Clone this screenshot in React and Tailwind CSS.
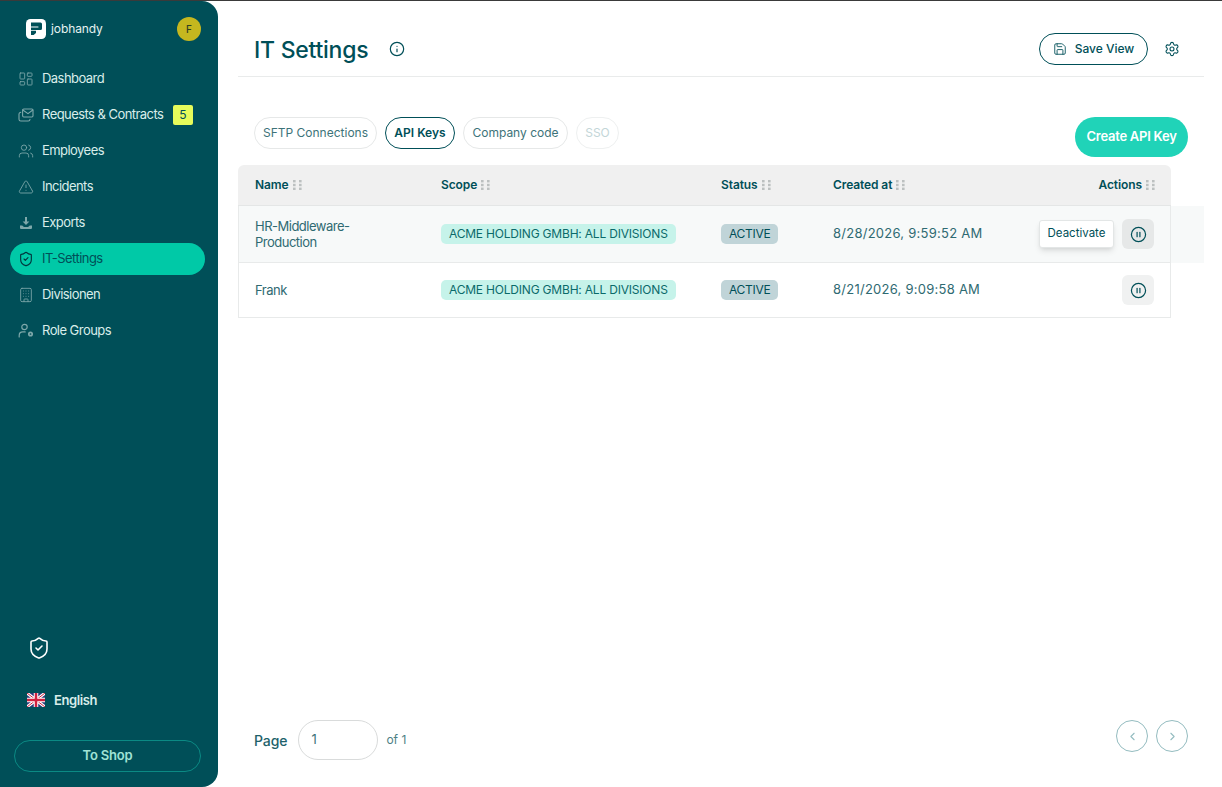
import React from 'react';
import { LayoutDashboard, Users, TriangleAlert, ShieldCheck, Building, Save, Settings, Info, CirclePause, ChevronLeft, ChevronRight } from 'lucide-react';

// icons the package has no match for
function RequestsIcon() {
  return (
    <svg width="16" height="16" viewBox="0 0 16 16" fill="none" stroke="currentColor" strokeWidth="1.1" strokeLinejoin="round" strokeLinecap="round">
      <rect x="4.6" y="2" width="10.4" height="8" rx="1.2" />
      <path d="M4.8 3l5.2 3.6L14.8 3" />
      <path d="M2.8 5.2C1.8 5.4 1 6 1 7v5.2C1 13.3 1.8 14 2.8 14h7.4c1 0 1.8-.7 1.8-1.8" />
    </svg>
  );
}

function ExportsIcon() {
  return (
    <svg width="16" height="16" viewBox="0 0 16 16" fill="currentColor">
      <path d="M7 2h2v4.5h2.4L8 10 4.6 6.5H7z" />
      <path d="M2 10.5h2.2L6 12h4l1.8-1.5H14v2.2c0 .8-.6 1.3-1.3 1.3H3.3c-.7 0-1.3-.5-1.3-1.3z" />
    </svg>
  );
}

function RoleIcon() {
  return (
    <svg width="16" height="16" viewBox="0 0 16 16" fill="none" stroke="currentColor" strokeWidth="1.2" strokeLinecap="round">
      <circle cx="6.5" cy="4" r="2.7" />
      <path d="M1.2 14v-1.5c0-2.2 1.6-3.6 3.6-3.6h2.4" />
      <circle cx="12.5" cy="11" r="1.7" strokeWidth="1.7" />
    </svg>
  );
}

function DragDots() {
  return (
    <svg width="9" height="10" viewBox="0 0 9 10" fill="#bcc0c0" className="shrink-0 -mt-px">
      <rect x="0" y="0" width="2.6" height="2.4" />
      <rect x="6" y="0" width="2.6" height="2.4" />
      <rect x="0" y="3.8" width="2.6" height="2.4" />
      <rect x="6" y="3.8" width="2.6" height="2.4" />
      <rect x="0" y="7.6" width="2.6" height="2.4" />
      <rect x="6" y="7.6" width="2.6" height="2.4" />
    </svg>
  );
}

function UkFlag() {
  return (
    <svg width="18" height="14" viewBox="0 0 18 14">
      <rect width="18" height="14" fill="#2b3a78" />
      <path d="M0 0l18 14M18 0L0 14" stroke="#fff" strokeWidth="3" />
      <path d="M0 0l18 14M18 0L0 14" stroke="#d0213f" strokeWidth="1" />
      <path d="M9 0v14M0 7h18" stroke="#fff" strokeWidth="4.5" />
      <path d="M9 0v14M0 7h18" stroke="#d0213f" strokeWidth="2.5" />
    </svg>
  );
}

const navItems = [
  { label: 'Dashboard', icon: <LayoutDashboard size={16} strokeWidth={1.3} /> },
  { label: 'Requests & Contracts', icon: <RequestsIcon />, badge: '5' },
  { label: 'Employees', icon: <Users size={16} strokeWidth={1.3} /> },
  { label: 'Incidents', icon: <TriangleAlert size={16} strokeWidth={1.3} /> },
  { label: 'Exports', icon: <ExportsIcon /> },
  { label: 'IT-Settings', icon: <ShieldCheck size={16} strokeWidth={1.7} />, active: true },
  { label: 'Divisionen', icon: <Building size={16} strokeWidth={1.3} /> },
  { label: 'Role Groups', icon: <RoleIcon /> },
];

const rows = [
  { name: ['HR-Middleware-', 'Production'], created: '8/28/2026, 9:59:52 AM', hover: true },
  { name: ['Frank'], created: '8/21/2026, 9:09:58 AM' },
];

function Sidebar() {
  return (
    <aside className="w-[218px] shrink-0 h-full bg-[#004f58] rounded-r-2xl flex flex-col">
      <div className="flex items-center justify-between pl-[26px] pr-[17px] h-[61px] pb-[5px]">
        <div className="flex items-center gap-[5px]">
          <svg width="20" height="20" viewBox="0 0 20 20">
            <rect width="20" height="20" rx="4.5" fill="#fff" />
            <path d="M5 3.5h9.5A1.5 1.5 0 0116 5v4.5a1.5 1.5 0 01-1.5 1.5H5V8.6h7.4V7.4H5z" fill="#004f58" />
            <path d="M5 11.8h5V14l-2.4 2H5z" fill="#004f58" />
          </svg>
          <span className="text-[12px] leading-none text-[#e6f2f1] font-normal tracking-[-0.1px]">jobhandy</span>
        </div>
        <div className="w-6 h-6 rounded-full bg-[#c5b71f] flex items-center justify-center text-[10px] font-medium text-[#2f3f22]">F</div>
      </div>
      <nav className="flex flex-col gap-1 pl-[10px] pr-[13px] mt-px">
        {navItems.map((item) => (
          <div
            key={item.label}
            className={`h-8 flex items-center gap-2 pl-2 pr-3 rounded-full ${item.active ? 'bg-[#00c9a7] text-[#004f58]' : 'text-[#d9edea]'}`}
          >
            <span className={item.active ? 'text-[#00363d]' : 'text-[#7ea8aa]'}>{item.icon}</span>
            <span className="text-[13px] tracking-[-0.55px] whitespace-nowrap">{item.label}</span>
            {item.badge && (
              <span className="ml-auto w-5 h-5 bg-[#e6fb5b] rounded-[2px] text-[#004f58] text-xs flex items-center justify-center">{item.badge}</span>
            )}
          </div>
        ))}
      </nav>
      <div className="mt-auto flex flex-col">
        <div className="pl-[27px] text-white">
          <ShieldCheck size={24} strokeWidth={1.6} />
        </div>
        <div className="flex items-center gap-[9px] pl-[27px] mt-[31px] text-[13px] font-semibold tracking-[-0.4px] text-[#d9edea]">
          <UkFlag />
          <span>English</span>
        </div>
        <button className="ml-[14px] mr-[17px] mt-[30px] mb-[15px] h-8 rounded-full border border-[#0b8a84] text-[13px] font-semibold tracking-[-0.2px] text-[#a0e3d5]">To Shop</button>
      </div>
    </aside>
  );
}

function Th({ children, className }) {
  return (
    <div className={`flex items-center gap-1 text-[12px] font-semibold tracking-[-0.1px] text-[#004f58] ${className}`}>
      {children}
      <DragDots />
    </div>
  );
}

function Row({ row }) {
  return (
    <div className={row.hover ? 'bg-[#f7f9f9]' : ''}>
      <div className={`w-[933px] flex items-center border-x border-b border-[#e8eaea] ${row.hover ? 'h-[57px]' : 'h-[55px]'}`}>
        <div className="w-[185px] pl-4 text-[13px] leading-4 text-[#2f6a72] tracking-[-0.5px]">
          {row.name.map((n) => <div key={n}>{n}</div>)}
        </div>
        <div className="w-[280px] pl-[17px] flex">
          <span className="h-5 flex items-center px-2 rounded-[5px] bg-[#c6f3ea] text-[12px] text-[#0b6a6a] tracking-[-0.2px] whitespace-nowrap">ACME HOLDING GMBH: ALL DIVISIONS</span>
        </div>
        <div className="w-[112px] pl-[17px] flex">
          <span className="h-5 flex items-center px-2 rounded-[5px] bg-[#c0d4d8] text-[12px] text-[#004f58] tracking-[-0.3px]">ACTIVE</span>
        </div>
        <div className="w-[206px] pl-[17px] text-[13px] text-[#2f6a72] tracking-[0.25px] whitespace-nowrap">{row.created}</div>
        <div className="flex-1 flex justify-end pr-4 relative">
          {row.hover && (
            <div className="absolute right-[56px] top-px h-7 w-[75px] flex items-center justify-center bg-white rounded-[3px] border border-[#e3e6e6] shadow-md text-[11.5px] text-[#004f58]">Deactivate</div>
          )}
          <button className={`w-8 h-[30px] rounded-md flex items-center justify-center text-[#004f58] ${row.hover ? 'bg-[#e6e8e8]' : 'bg-[#f0f1f1]'}`}>
            <CirclePause size={17} strokeWidth={1.7} />
          </button>
        </div>
      </div>
    </div>
  );
}

export default function App() {
  return (
    <div className="h-[787px] w-[1222px] overflow-hidden border-t border-[#3a3a3a] bg-white flex font-['Inter',sans-serif]">
      <Sidebar />
      <main className="flex-1 min-w-0 flex flex-col pl-5 pr-[18px]">
        <header className="h-[76px] shrink-0 border-b border-[#e9ebeb] flex items-center pl-4 pr-[24px] pt-[23px]">
          <h1 className="text-[23px] font-medium text-[#004f58] tracking-[-0.25px]">IT Settings</h1>
          <Info size={16} strokeWidth={1.8} className="ml-[21px] mb-[2px] text-[#004f58]" />
          <button className="ml-auto mb-[2px] h-8 w-[109px] mr-4 rounded-full border border-[#004f58] flex items-center justify-center gap-2 text-[12px] font-medium text-[#004f58]">
            <Save size={14} strokeWidth={1.5} />
            Save View
          </button>
          <Settings size={16} strokeWidth={1.6} className="mb-[2px] text-[#004f58]" />
        </header>

        <div className="flex items-end justify-between pl-4 mt-[41px] pr-4 h-[47px]">
          <div className="flex gap-2 pb-4 items-center">
            <span className="h-8 flex items-center rounded-full border border-[#e6e8e8] text-[12px] text-[#3d7379] w-[123px] justify-center whitespace-nowrap">SFTP Connections</span>
            <span className="h-8 flex items-center rounded-full border border-[#004f58] text-[12px] font-semibold text-[#004f58] w-[70px] justify-center whitespace-nowrap">API Keys</span>
            <span className="h-8 flex items-center rounded-full border border-[#e6e8e8] text-[12px] text-[#3d7379] w-[105px] justify-center whitespace-nowrap">Company code</span>
            <span className="h-8 flex items-center rounded-full border border-[#eef0f0] text-[12px] text-[#c3d6d8] w-[43px] justify-center">SSO</span>
          </div>
          <button className="h-10 w-[113px] rounded-full bg-[#20d3b8] text-white text-[13px] font-semibold tracking-[-0.25px] self-end mb-2 whitespace-nowrap">Create API Key</button>
        </div>

        <div className="flex-1 min-h-0">
          <div className="w-[933px] h-[41px] bg-[#f0f0f0] rounded-t-md border-b border-[#e4e6e6] flex items-center">
            <Th className="w-[186px] pl-[17px]">Name</Th>
            <Th className="w-[280px] pl-[17px]">Scope</Th>
            <Th className="w-[112px] pl-[17px]">Status</Th>
            <Th className="w-[206px] pl-[17px]">Created at</Th>
            <Th className="flex-1 justify-end pr-4">Actions</Th>
          </div>
          {rows.map((row) => <Row key={row.created} row={row} />)}
        </div>

        <footer className="h-[67px] shrink-0 flex items-start pl-4 pr-4">
          <span className="h-10 flex items-center text-[14px] font-medium tracking-[-0.1px] text-[#1d616a]">Page</span>
          <div className="ml-[11px] w-20 h-10 rounded-full border border-[#d9dbdb] flex items-center pl-3 text-[13px] text-[#3d7379]">1</div>
          <span className="ml-2 h-10 flex items-center text-[12px] text-[#4d7f85]">of 1</span>
          <div className="ml-auto flex gap-2">
            <button className="w-8 h-8 rounded-full border border-[#94bcc0] flex items-center justify-center text-[#94bcc0]"><ChevronLeft size={13} /></button>
            <button className="w-8 h-8 rounded-full border border-[#94bcc0] flex items-center justify-center text-[#94bcc0]"><ChevronRight size={13} /></button>
          </div>
        </footer>
      </main>
    </div>
  );
}
